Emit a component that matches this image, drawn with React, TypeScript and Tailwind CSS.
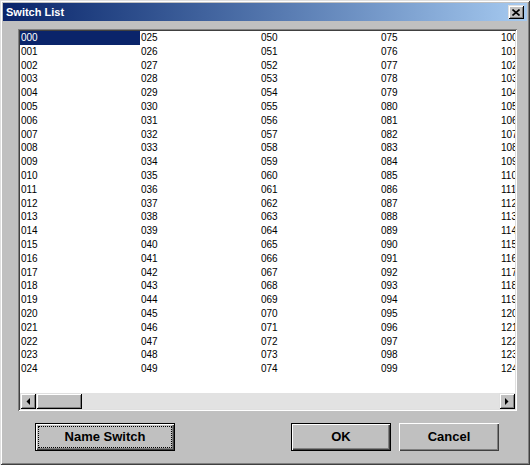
import React from "react";

const pad = (n: number) => String(n).padStart(3, "0");

const raised =
  "bg-[#c0c0c0] shadow-[inset_1px_1px_#dfdfdf,inset_-1px_-1px_#000,inset_2px_2px_#fff,inset_-2px_-2px_#808080]";

function Arrow({ dir }: { dir: "left" | "right" }) {
  return (
    <div className={`w-[16px] h-full flex items-center justify-center ${raised}`}>
      <svg width="4" height="7" viewBox="0 0 4 7">
        {dir === "left" ? <polygon points="4,0 4,7 0.5,3.5" fill="#000" /> : <polygon points="0,0 0,7 3.5,3.5" fill="#000" />}
      </svg>
    </div>
  );
}

function Button({ label, width, def, focus }: { label: string; width: string; def?: boolean; focus?: boolean }) {
  return (
    <button
      className={`relative h-[28px] ${width} bg-[#c0c0c0] text-[13px] font-bold text-black ${
        def
          ? "border border-black shadow-[inset_1px_1px_#fff,inset_-1px_-1px_#404040,inset_-2px_-2px_#808080]"
          : "shadow-[inset_1px_1px_#fff,inset_-1px_-1px_#404040,inset_-2px_-2px_#808080]"
      }`}
    >
      {focus && <span className="absolute inset-[2px] border border-dotted border-black" />}
      {label}
    </button>
  );
}

export default function App() {
  const columns = [0, 1, 2, 3, 4];

  return (
    <div className="w-[530px] h-[465px] bg-[#c0c0c0] p-[3px] flex flex-col overflow-hidden select-none font-['Liberation_Sans',Arial,sans-serif] shadow-[inset_1px_1px_#dfdfdf,inset_-1px_-1px_#404040,inset_2px_2px_#fff,inset_-2px_-2px_#808080]">
      {/* Title bar */}
      <div className="h-[18px] shrink-0 flex items-center justify-between pl-[3px] pr-[3px] bg-gradient-to-r from-[#0a246a] to-[#a6caf0]">
        <span className="text-white font-bold text-[11px] leading-none">Switch List</span>
        <div className={`w-[16px] h-[14px] flex items-center justify-center ${raised}`}>
          <svg width="8" height="7" viewBox="0 0 8 7">
            <path d="M0.5 0.5 L7.5 6.5 M7.5 0.5 L0.5 6.5" stroke="#000" strokeWidth="1.6" />
          </svg>
        </div>
      </div>

      {/* Body */}
      <div className="flex flex-col pl-[15px] pt-[8px]">
        <div className="w-[499px] h-[382px] p-[2px] flex flex-col shadow-[inset_1px_1px_#808080,inset_-1px_-1px_#fff,inset_2px_2px_#404040,inset_-2px_-2px_#dfdfdf]">
          <div className="flex-1 bg-white overflow-hidden flex">
            {columns.map((c) => (
              <div key={c} className="w-[120px] shrink-0 flex flex-col">
                {Array.from({ length: 25 }, (_, r) => {
                  const n = c * 25 + r;
                  const sel = n === 0;
                  return (
                    <div
                      key={n}
                      className={`h-[13.8px] leading-[13.8px] pl-[1px] text-[10px] ${
                        sel ? "bg-[#0a246a] text-white" : "text-black"
                      }`}
                    >
                      {pad(n)}
                    </div>
                  );
                })}
              </div>
            ))}
          </div>
          {/* Horizontal scrollbar */}
          <div className="h-[16px] shrink-0 flex">
            <Arrow dir="left" />
            <div className={`w-[46px] h-full ${raised}`} />
            <div className="flex-1 bg-[#e2e2e2]" />
            <Arrow dir="right" />
          </div>
        </div>

        {/* Buttons */}
        <div className="flex mt-[12px]">
          <div className="ml-[17px]">
            <Button label="Name Switch" width="w-[140px]" def focus />
          </div>
          <div className="ml-[116px]">
            <Button label="OK" width="w-[100px]" def />
          </div>
          <div className="ml-[8px]">
            <Button label="Cancel" width="w-[100px]" />
          </div>
        </div>
      </div>
    </div>
  );
}
